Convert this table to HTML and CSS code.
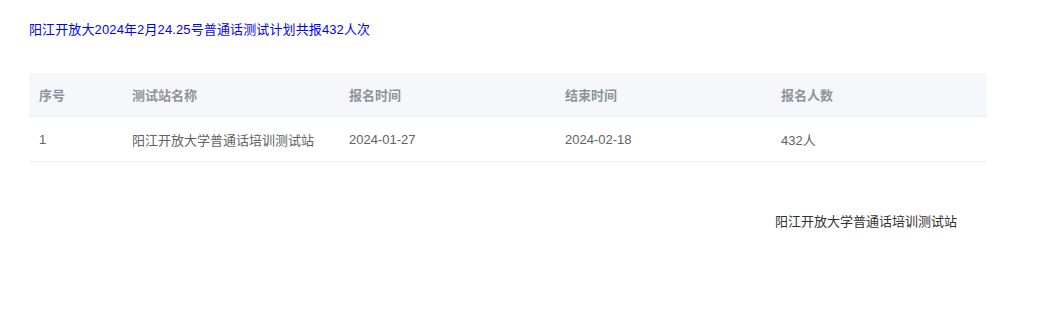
FILE: index.html
```html
<!DOCTYPE html>
<html lang="zh-CN">
<head>
<meta charset="utf-8">
<link rel="stylesheet" href="styles.css">
</head>
<body>
<div class="page">
  <div class="title">阳江开放大2024年2月24.25号普通话测试计划共报432人次</div>
  <div class="table">
    <div class="row head">
      <div class="cell c1">序号</div>
      <div class="cell">测试站名称</div>
      <div class="cell">报名时间</div>
      <div class="cell">结束时间</div>
      <div class="cell">报名人数</div>
    </div>
    <div class="row body">
      <div class="cell c1">1</div>
      <div class="cell">阳江开放大学普通话培训测试站</div>
      <div class="cell">2024-01-27</div>
      <div class="cell">2024-02-18</div>
      <div class="cell">432人</div>
    </div>
  </div>
  <div class="sign">阳江开放大学普通话培训测试站</div>
</div>
</body>
</html>
```

FILE: styles.css
```css
html, body {
  margin: 0;
  padding: 0;
  background: #fff;
}
body {
  font-family: "Liberation Sans", "Noto Sans CJK SC", sans-serif;
  font-size: 13px;
}
.page {
  width: 958px;
  padding: 21px 0 0 29px;
}
.title {
  color: #0000ff;
  line-height: 18px;
  height: 18px;
  letter-spacing: 0.12px;
}
.table {
  margin-top: 34px;
}
.row {
  display: grid;
  grid-template-columns: 93px 217px 216px 216px 216px;
  border-bottom: 1px solid #ebeef5;
}
.head {
  background: #f5f7fa;
  color: #909399;
  font-weight: bold;
  height: 43px;
}
.body {
  color: #606266;
  height: 44px;
}
.cell {
  display: flex;
  align-items: center;
  padding-left: 10px;
}
.sign {
  margin-top: 51px;
  text-align: right;
  padding-right: 30px;
  color: #303133;
  line-height: 18px;
}
```
